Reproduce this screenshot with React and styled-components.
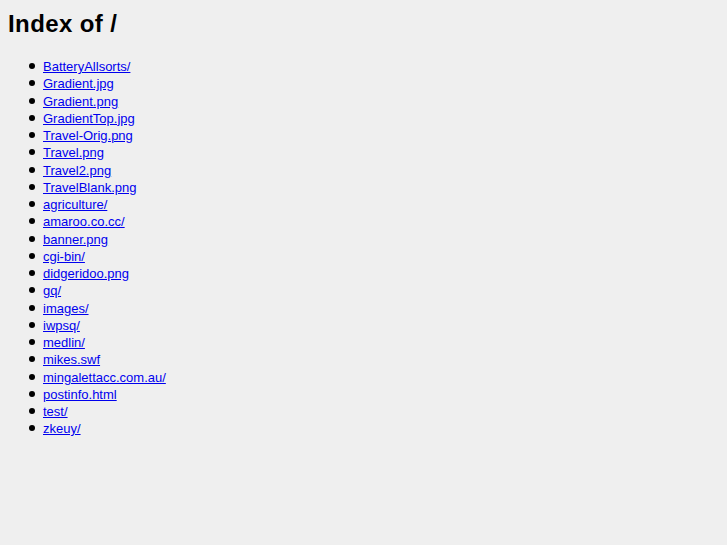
import React from "react";
import styled, { createGlobalStyle } from "styled-components";

const Global = createGlobalStyle`
  html, body { background: #efefef; }
  body {
    margin: 0;
    padding: 0 8px;
    font-family: "Liberation Sans", Arial, sans-serif;
    color: #000;
  }
`;

const Title = styled.h1`
  font-size: 24px;
  font-weight: bold;
  letter-spacing: 0.4px;
  margin: 10px 0 20px 0;
  line-height: normal;
`;

const List = styled.ul`
  margin: 0;
  padding-left: 21px;
  font-size: 13px;
  line-height: 17.25px;
  list-style: none;
`;

const Item = styled.li`
  display: flex;
  align-items: center;
`;

const Bullet = styled.span`
  flex: none;
  width: 6px;
  height: 6px;
  border-radius: 50%;
  background: #000;
  margin: 0 8px 1px 0;
`;

const Link = styled.a`
  color: #0000ee;
  text-decoration: underline;
`;

const entries = [
  "BatteryAllsorts/",
  "Gradient.jpg",
  "Gradient.png",
  "GradientTop.jpg",
  "Travel-Orig.png",
  "Travel.png",
  "Travel2.png",
  "TravelBlank.png",
  "agriculture/",
  "amaroo.co.cc/",
  "banner.png",
  "cgi-bin/",
  "didgeridoo.png",
  "gq/",
  "images/",
  "iwpsq/",
  "medlin/",
  "mikes.swf",
  "mingalettacc.com.au/",
  "postinfo.html",
  "test/",
  "zkeuy/",
];

export default function App() {
  return (
    <>
      <Global />
      <Title>Index of /</Title>
      <List>
        {entries.map((e) => (
          <Item key={e}>
            <Bullet />
            <Link href={"#" + e}>{e}</Link>
          </Item>
        ))}
      </List>
    </>
  );
}
